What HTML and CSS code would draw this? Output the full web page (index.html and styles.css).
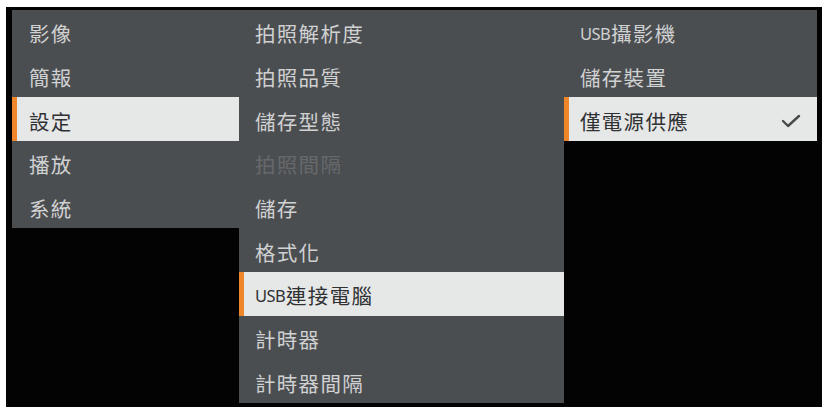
FILE: index.html
```html
<!DOCTYPE html>
<html lang="zh-Hant">
<head>
<meta charset="utf-8">
<title>設定選單</title>
<link rel="stylesheet" href="styles.css">
</head>
<body>
<div class="screen">
  <ul class="menu menu-main">
    <li class="item">影像</li>
    <li class="item">簡報</li>
    <li class="item active">設定</li>
    <li class="item">播放</li>
    <li class="item">系統</li>
  </ul>
  <ul class="menu menu-sub">
    <li class="item">拍照解析度</li>
    <li class="item">拍照品質</li>
    <li class="item">儲存型態</li>
    <li class="item disabled">拍照間隔</li>
    <li class="item">儲存</li>
    <li class="item">格式化</li>
    <li class="item active"><span class="latin">USB</span>連接電腦</li>
    <li class="item">計時器</li>
    <li class="item">計時器間隔</li>
  </ul>
  <ul class="menu menu-opt">
    <li class="item"><span class="latin">USB</span>攝影機</li>
    <li class="item">儲存裝置</li>
    <li class="item active">僅電源供應<svg class="check" width="20" height="14" viewBox="0 0 20 14"><polyline points="2,7 7,12 18,2" fill="none" stroke="#4a4a4a" stroke-width="2.4" stroke-linecap="round" stroke-linejoin="round"/></svg></li>
  </ul>
</div>
</body>
</html>
```

FILE: styles.css
```css
html, body {
  margin: 0;
  padding: 0;
  background: #ffffff;
}
body {
  width: 824px;
  height: 409px;
  overflow: hidden;
  font-family: "Noto Sans CJK TC", "Noto Sans", sans-serif;
}
.screen {
  margin: 7px 0 0 6px;
  width: 816px;
  height: 400px;
  box-sizing: border-box;
  padding: 3px 5px 0 6px;
  background: #030303;
  display: flex;
  align-items: flex-start;
}
.menu {
  list-style: none;
  margin: 0;
  padding: 0;
  background: #4b4e51;
}
.menu-main { width: 227px; }
.menu-sub { width: 325px; }
.menu-opt { width: 253px; }
.item {
  height: 43.7px;
  box-sizing: border-box;
  padding: 3px 16px 0 17px;
  display: flex;
  align-items: center;
  font-size: 20.5px;
  letter-spacing: 1.3px;
  color: #d0d1d1;
  white-space: nowrap;
}
.menu-sub .item,
.menu-opt .item {
  padding-left: 16px;
}
.latin {
  font-family: "Noto Sans", "Liberation Sans", sans-serif;
  font-size: 16.5px;
  letter-spacing: -0.6px;
  margin-right: 1px;
}
.item.disabled {
  color: #66696c;
}
.item.active {
  background: #e6e7e7;
  color: #2f3133;
  border-left: 5px solid #f0862a;
  padding-left: 12px;
}
.menu-sub .item.active,
.menu-opt .item.active {
  padding-left: 11px;
}
.check {
  margin-left: auto;
  margin-right: 0;
}
```
